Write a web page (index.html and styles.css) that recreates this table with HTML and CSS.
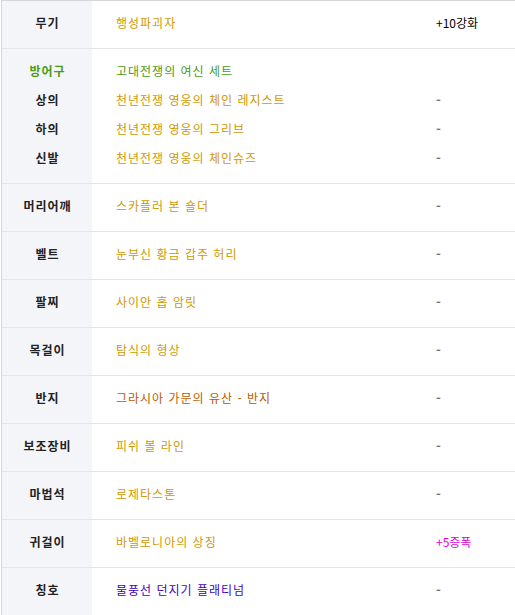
FILE: index.html
```html
<!DOCTYPE html>
<html lang="ko">
<head>
<meta charset="utf-8">
<link rel="stylesheet" href="styles.css">
</head>
<body>
<div class="equip">
  <div class="row">
    <div class="label">무기</div>
    <div class="name"><div class="line unique">행성파괴자</div></div>
    <div class="extra"><div class="line plus">+10강화</div></div>
  </div>
  <div class="row group">
    <div class="label">
      <div class="line set">방어구</div>
      <div class="line">상의</div>
      <div class="line">하의</div>
      <div class="line">신발</div>
    </div>
    <div class="name">
      <div class="line set">고대전쟁의 여신 세트</div>
      <div class="line unique">천년전쟁 영웅의 체인 레지스트</div>
      <div class="line unique">천년전쟁 영웅의 그리브</div>
      <div class="line unique">천년전쟁 영웅의 체인슈즈</div>
    </div>
    <div class="extra">
      <div class="line">&nbsp;</div>
      <div class="line dash">-</div>
      <div class="line dash">-</div>
      <div class="line dash">-</div>
    </div>
  </div>
  <div class="row">
    <div class="label">머리어깨</div>
    <div class="name"><div class="line unique">스카플러 본 숄더</div></div>
    <div class="extra"><div class="line dash">-</div></div>
  </div>
  <div class="row">
    <div class="label">벨트</div>
    <div class="name"><div class="line unique">눈부신 황금 갑주 허리</div></div>
    <div class="extra"><div class="line dash">-</div></div>
  </div>
  <div class="row">
    <div class="label">팔찌</div>
    <div class="name"><div class="line unique">사이안 홉 암릿</div></div>
    <div class="extra"><div class="line dash">-</div></div>
  </div>
  <div class="row">
    <div class="label">목걸이</div>
    <div class="name"><div class="line unique">탐식의 형상</div></div>
    <div class="extra"><div class="line dash">-</div></div>
  </div>
  <div class="row">
    <div class="label">반지</div>
    <div class="name"><div class="line heirloom">그라시아 가문의 유산 - 반지</div></div>
    <div class="extra"><div class="line dash">-</div></div>
  </div>
  <div class="row">
    <div class="label">보조장비</div>
    <div class="name"><div class="line unique">피쉬 볼 라인</div></div>
    <div class="extra"><div class="line dash">-</div></div>
  </div>
  <div class="row">
    <div class="label">마법석</div>
    <div class="name"><div class="line unique">로제타스톤</div></div>
    <div class="extra"><div class="line dash">-</div></div>
  </div>
  <div class="row">
    <div class="label">귀걸이</div>
    <div class="name"><div class="line unique">바벨로니아의 상징</div></div>
    <div class="extra"><div class="line amp">+5증폭</div></div>
  </div>
  <div class="row">
    <div class="label">칭호</div>
    <div class="name"><div class="line title">물풍선 던지기 플래티넘</div></div>
    <div class="extra"><div class="line dash">-</div></div>
  </div>
</div>
</body>
</html>
```

FILE: styles.css
```css
html, body {
  margin: 0;
  padding: 0;
  background: #ffffff;
}
body {
  padding-left: 1px;
  font-family: "Noto Sans CJK KR", "Noto Sans", sans-serif;
  font-size: 12px;
  color: #222;
}
.equip {
  border-left: 1px solid #d4d6dc;
  border-top: 1px solid #d4d6dc;
  overflow: hidden;
}
.row {
  display: grid;
  grid-template-columns: 90px 344px 1fr;
  height: 47px;
  border-bottom: 1px solid #e6e6e6;
}
.row.group {
  height: 134px;
}
.label, .name, .extra {
  display: flex;
  flex-direction: column;
  justify-content: center;
  padding-bottom: 4px;
}
.label {
  background: #f4f5f9;
  align-items: center;
  font-weight: bold;
  color: #222;
  letter-spacing: 1px;
  padding-left: 1px;
}
.name {
  padding-left: 24px;
  letter-spacing: 1px;
}
.line {
  line-height: 29px;
  white-space: nowrap;
}
.unique { color: #cf9800; }
.set { color: #4a9a17; }
.heirloom { color: #b85a00; }
.title { color: #4000c4; }
.plus { color: #000; }
.dash { color: #6f7280; font-weight: bold; font-size: 13px; }
.amp { color: #e000e0; }
```
